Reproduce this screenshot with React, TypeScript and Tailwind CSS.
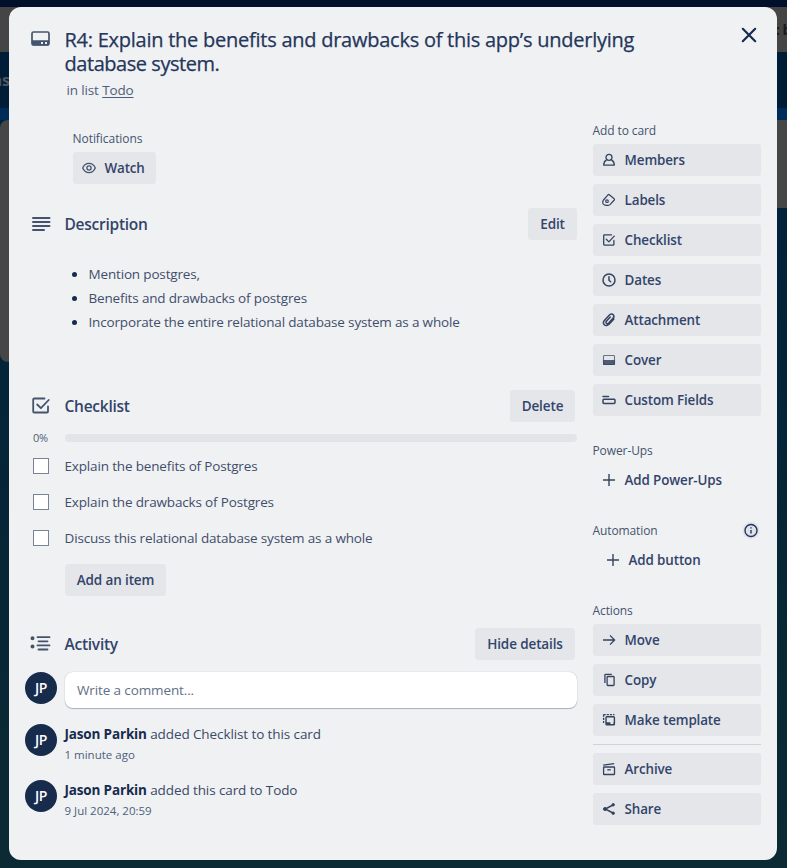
import React from "react";

type IconName =
  | "members" | "labels" | "checklist" | "dates" | "attachment" | "cover" | "fields"
  | "plus" | "move" | "copy" | "template" | "archive" | "share";

const shapes: Record<IconName, React.ReactNode> = {
  members: (
    <g fill="none" stroke="currentColor" strokeWidth="1.3" strokeLinejoin="round">
      <circle cx="8" cy="5.3" r="3" />
      <path d="M5.6 7.8C3.7 8.8 2.7 10.5 2.7 13.2H13.3C13.3 10.5 12.3 8.8 10.4 7.8" />
    </g>
  ),
  labels: (
    <g fill="none" stroke="currentColor" strokeWidth="1.2" strokeLinejoin="round">
      <path d="M8.3 2.7L13.2 6.8Q13.8 7.4 13.3 8L9 12.6Q7.6 13.8 5.5 13.3L3.3 12.8Q2.1 12.4 1.8 11.2Q1.4 9.3 2.5 8L7 2.8Q7.6 2.1 8.3 2.7Z" />
      <circle cx="6" cy="9.2" r="1.3" />
    </g>
  ),
  checklist: (
    <g fill="none" stroke="currentColor" strokeWidth="1.3" strokeLinejoin="round" strokeLinecap="round">
      <path d="M10.5 2.9H3.2Q2.7 2.9 2.7 3.4V12.6Q2.7 13.1 3.2 13.1H12.4Q12.9 13.1 12.9 12.6V8.5" />
      <path d="M5.3 7.2L7.9 9.9L13.2 4.1" />
    </g>
  ),
  dates: (
    <g fill="none" stroke="currentColor" strokeWidth="1.5" strokeLinecap="round" strokeLinejoin="round">
      <circle cx="8" cy="8" r="6" />
      <path d="M8 4.7V8.2L9.6 9.7" />
    </g>
  ),
  attachment: (
    <path
      d="M12.9 7.1L8.3 12.1C6.8 13.7 4.5 14.1 3.3 12.8C2.1 11.5 2.4 9.4 3.8 7.9L8.2 3.2C9.4 1.9 11.2 1.7 12.2 2.7C13.2 3.8 13 5.4 11.8 6.6L7.7 11C6.9 11.8 5.9 11.9 5.3 11.3C4.7 10.7 4.8 9.7 5.6 8.9L9.3 5"
      fill="none" stroke="currentColor" strokeWidth="1.5" strokeLinecap="round"
    />
  ),
  cover: (
    <g>
      <rect x="2.5" y="3.5" width="11" height="9" rx="0.8" fill="none" stroke="currentColor" strokeWidth="1.1" opacity="0.7" />
      <rect x="2" y="8" width="12" height="5" rx="0.8" fill="currentColor" opacity="0.85" />
    </g>
  ),
  fields: (
    <g fill="none" stroke="currentColor" strokeWidth="1.5" strokeLinecap="round">
      <path d="M2 4.6H7.5" />
      <rect x="2" y="7.3" width="12" height="4.2" rx="0.9" />
    </g>
  ),
  plus: <path d="M8 2V14M2 8H14" stroke="currentColor" strokeWidth="1.4" />,
  move: <path d="M2 8H13.6M9 3.4L13.6 8L9 12.6" fill="none" stroke="currentColor" strokeWidth="1.3" />,
  copy: (
    <g fill="none" stroke="currentColor" strokeWidth="1.3" strokeLinejoin="round">
      <rect x="6.1" y="4.5" width="7" height="9" rx="0.7" />
      <path d="M3.9 10.9V3Q3.9 2.4 4.5 2.4H10.8" />
    </g>
  ),
  template: (
    <g fill="none" stroke="currentColor">
      <rect x="5" y="4.8" width="8.4" height="8" rx="0.8" strokeWidth="1.4" />
      <path d="M5 11.4H9.4M12.6 11.4H13.4" strokeWidth="2.4" />
      <path d="M2.5 2.7H13.5" strokeWidth="1.3" strokeDasharray="2.2 1" />
      <path d="M2.6 2.5V12" strokeWidth="1.3" strokeDasharray="2.2 1" />
    </g>
  ),
  archive: (
    <g fill="none" stroke="currentColor" strokeWidth="1.3" strokeLinejoin="round">
      <path d="M2.2 4.1L13.2 2.7" />
      <rect x="2.6" y="6" width="10.9" height="7.5" rx="0.6" />
      <path d="M6.3 8.8H9.8" />
    </g>
  ),
  share: (
    <g stroke="currentColor" fill="currentColor">
      <path d="M12 4L4.2 8L12 12" fill="none" strokeWidth="1.5" />
      <circle cx="4" cy="8" r="1.5" />
      <circle cx="12.2" cy="3.8" r="1.2" />
      <circle cx="12.2" cy="12.2" r="1.2" />
    </g>
  ),
};

function Icon({ name }: { name: IconName }) {
  return (
    <svg viewBox="0 0 16 16" className="h-4 w-4 shrink-0 text-[#34435f]">
      {shapes[name]}
    </svg>
  );
}

function SideButton({ icon, children, className = "bg-[#e4e6ea] pl-2" }: { icon: IconName; children: React.ReactNode; className?: string }) {
  return (
    <button className={`flex h-8 w-full items-center gap-[7.6px] rounded-[3px] text-[13.4px] font-semibold tracking-[-0.12px] whitespace-nowrap text-[#33446a] ${className}`}>
      <Icon name={icon} />
      <span>{children}</span>
    </button>
  );
}

function SideLabel({ children }: { children: React.ReactNode }) {
  return <h3 className="-ml-[0.5px] text-xs leading-5 font-medium tracking-[-0.1px] text-[#44546f]">{children}</h3>;
}

function GreyButton({ children, className }: { children: React.ReactNode; className: string }) {
  return (
    <button className={`flex h-8 shrink-0 items-center justify-center rounded-[3px] bg-[#e4e6ea] text-[13.5px] font-semibold tracking-[-0.12px] whitespace-nowrap text-[#33446a] ${className}`}>
      {children}
    </button>
  );
}

function SectionHeader({ icon, title, children }: { icon: React.ReactNode; title: string; children: React.ReactNode }) {
  return (
    <div className="flex h-8 items-center">
      <svg viewBox="0 0 24 20" className="ml-1 h-5 w-6 shrink-0 text-[#44546f]">{icon}</svg>
      <h2 className="ml-[11.5px] flex-1 text-[15.5px] leading-6 font-semibold tracking-[-0.26px] text-[#33446a]">{title}</h2>
      {children}
    </div>
  );
}

function Avatar() {
  return (
    <div className="flex h-8 w-8 shrink-0 items-center justify-center rounded-full bg-[#172b4d] text-sm font-semibold tracking-[-0.3px] text-white">
      JP
    </div>
  );
}

function CheckItem({ children }: { children: React.ReactNode }) {
  return (
    <li className="flex h-9 items-center">
      <span className="ml-2 h-4 w-4 shrink-0 border border-[#78839a] bg-white" />
      <span className="ml-[15.5px] text-[13.5px] tracking-[-0.16px] text-[#3f4e6b]">{children}</span>
    </li>
  );
}

function ActivityEntry({ action, time }: { action: string; time: string }) {
  return (
    <li className="flex h-14 gap-[7.5px]">
      <Avatar />
      <div>
        <p className="text-[13.5px] leading-5 tracking-[-0.1px] text-[#3a4967]">
          <span className="font-bold tracking-[-0.16px] text-[#172b4d]">Jason Parkin</span> {action}
        </p>
        <p className="mt-px text-[11.5px] leading-5 text-[#4f5e7a]">{time}</p>
      </div>
    </li>
  );
}

function Backdrop() {
  return (
    <div className="flex h-full flex-col bg-linear-to-b from-[#001f3c] to-[#0c2a33]">
      <div className="h-[7px] bg-[#00102b]" />
      <div className="flex h-[45px] items-center justify-end bg-[#444544] text-sm font-bold whitespace-nowrap text-[#171b20]">
        <span className="w-[11px] tracking-[-0.6px]">: b</span>
      </div>
      <div className="flex h-14 items-center bg-[#001d38] text-base font-bold text-[#4c555e]">
        <span className="flex w-[10px] justify-end">as</span>
      </div>
      <div className="h-3 bg-[#002c58]" />
      <div className="flex items-start justify-between">
        <div className="h-[242px] w-6 rounded-l-lg bg-[#454646]" />
        <div className="h-[88px] w-6 bg-[#454646]" />
      </div>
    </div>
  );
}

export default function App() {
  return (
    <div className="relative h-[868px] w-[787px] overflow-hidden font-['Open_Sans','Noto_Sans',sans-serif]">
      <Backdrop />
      <div role="dialog" className="absolute top-[7px] left-[9px] flex h-[853px] w-[768px] rounded-xl bg-[#f0f1f3]">
        <main className="ml-4 w-[552px] shrink-0">
          <header className="mt-[21px] flex h-[100px]">
            <svg viewBox="0 0 20 16" className="mt-[3px] ml-[6px] h-4 w-5 shrink-0 text-[#44546f]">
              <rect x="1" y="1" width="17" height="13" rx="1.5" fill="none" stroke="currentColor" strokeWidth="1.7" />
              <path d="M1 9.2H18V13.5Q18 14.5 17 14.5H2Q1 14.5 1 13.5Z" fill="currentColor" />
              <rect x="10" y="11" width="2" height="2" fill="#f0f1f3" />
              <rect x="14" y="11" width="2" height="2" fill="#f0f1f3" />
            </svg>
            <div className="ml-[13.5px] whitespace-nowrap">
              <h1 className="text-xl leading-6 font-medium text-[#24365a] [-webkit-text-stroke:0.25px]">
                <span className="block tracking-[-0.25px]">R4: Explain the benefits and drawbacks of this app’s underlying</span>
                <span className="block tracking-[-0.45px]">database system.</span>
              </h1>
              <p className="mt-1 ml-[2px] text-[13.5px] leading-5 tracking-[-0.14px] text-[#4f5e7a]">
                in list <a className="underline underline-offset-2">Todo</a>
              </p>
            </div>
          </header>

          <section className="ml-12">
            <h3 className="-ml-[0.5px] text-xs leading-[22px] font-medium tracking-[-0.05px] text-[#44546f]">Notifications</h3>
            <button className="mt-[2px] flex h-8 w-[83px] items-center gap-2 rounded-[3px] bg-[#e4e6ea] pl-[7.5px] text-[13.4px] font-semibold tracking-[-0.15px] text-[#33446a]">
              <svg viewBox="0 0 16 16" className="h-4 w-4 shrink-0 text-[#44546f]" fill="none" stroke="currentColor" strokeWidth="1.3">
                <path d="M1.7 8C3 5 5.3 3.4 8 3.4S13 5 14.3 8C13 11 10.7 12.6 8 12.6S3 11 1.7 8Z" />
                <circle cx="8" cy="8" r="2.1" />
              </svg>
              <span>Watch</span>
            </button>
          </section>

          <section className="mt-6">
            <SectionHeader
              title="Description"
              icon={<path d="M4 4H20.5M4 8H20.5M4 12H20.5M4 16H15" stroke="currentColor" strokeWidth="2" strokeLinecap="round" />}
            >
              <GreyButton className="w-[49px]">Edit</GreyButton>
            </SectionHeader>
            <ul className="mt-[22px] ml-[47px] text-[13.5px] leading-6 tracking-[-0.165px] text-[#3f4e6b]">
              {["Mention postgres,", "Benefits and drawbacks of postgres", "Incorporate the entire relational database system as a whole"].map((t) => (
                <li key={t} className="flex items-center">
                  <span className="mr-[11.5px] h-[5px] w-[5px] rounded-full bg-[#172b4d]" />
                  {t}
                </li>
              ))}
            </ul>
          </section>

          <section className="mt-14">
            <SectionHeader
              title="Checklist"
              icon={
                <g fill="none" stroke="currentColor" strokeWidth="1.8" strokeLinecap="round" strokeLinejoin="round">
                  <path d="M15.5 2.5H5.2Q4.2 2.5 4.2 3.5V15.5Q4.2 16.5 5.2 16.5H18Q19 16.5 19 15.5V10.5" />
                  <path d="M8.2 8.5L11.9 12.2L19.7 4" />
                </g>
              }
            >
              <GreyButton className="mr-[2px] w-[65px]">Delete</GreyButton>
            </SectionHeader>
            <div className="mt-3 flex h-2 items-center">
              <span className="w-10 pt-px pl-2 text-[11px] tracking-[-0.3px] text-[#4f5e7a]">0%</span>
              <div className="h-2 flex-1 rounded bg-[#e3e4e8]" />
            </div>
            <ul className="mt-[6px]">
              <CheckItem>Explain the benefits of Postgres</CheckItem>
              <CheckItem>Explain the drawbacks of Postgres</CheckItem>
              <CheckItem>Discuss this relational database system as a whole</CheckItem>
            </ul>
            <GreyButton className="mt-2 ml-10 w-[101px]">Add an item</GreyButton>
          </section>

          <section className="mt-8">
            <SectionHeader
              title="Activity"
              icon={
                <g stroke="currentColor" strokeWidth="1.8" strokeLinecap="round">
                  <path d="M8.5 3.2H20.5M9.5 7.3H18.5M8.5 11.4H20.5M9.5 15.5H18.5" />
                  <circle cx="3.5" cy="4.3" r="1.1" fill="currentColor" />
                  <circle cx="3.5" cy="12.4" r="1.1" fill="currentColor" />
                </g>
              }
            >
              <GreyButton className="mr-[2px] w-[100px]">Hide details</GreyButton>
            </SectionHeader>
            <div className="mt-3 flex h-13 gap-2">
              <Avatar />
              <div className="flex h-9 flex-1 items-center rounded-lg bg-white pl-3 text-[13.5px] tracking-[-0.12px] text-[#626f86] shadow-[0_1px_1px_#a9afba,0_0_1px_#a9afba]">
                Write a comment...
              </div>
            </div>
            <ul>
              <ActivityEntry action="added Checklist to this card" time="1 minute ago" />
              <ActivityEntry action="added this card to Todo" time="9 Jul 2024, 20:59" />
            </ul>
          </section>
        </main>

        <aside className="ml-4 w-[168px]">
          <button aria-label="Close" className="mt-[18px] ml-[146px] block h-5 w-5 text-[#172b4d]">
            <svg viewBox="0 0 20 20" className="h-5 w-5">
              <path d="M3.8 3.8L16.2 16.2M16.2 3.8L3.8 16.2" stroke="currentColor" strokeWidth="2.2" strokeLinecap="round" />
            </svg>
          </button>
          <div className="mt-[76px] flex flex-col gap-2">
            <div className="-mb-[5px]"><SideLabel>Add to card</SideLabel></div>
            <SideButton icon="members">Members</SideButton>
            <SideButton icon="labels">Labels</SideButton>
            <SideButton icon="checklist">Checklist</SideButton>
            <SideButton icon="dates">Dates</SideButton>
            <SideButton icon="attachment">Attachment</SideButton>
            <SideButton icon="cover">Cover</SideButton>
            <SideButton icon="fields">Custom Fields</SideButton>
          </div>
          <div className="mt-[25px]">
            <SideLabel>Power-Ups</SideLabel>
            <SideButton icon="plus" className="mt-[3px] pl-2">Add Power-Ups</SideButton>
          </div>
          <div className="mt-[25px]">
            <div className="flex items-center justify-between">
              <SideLabel>Automation</SideLabel>
              <svg viewBox="0 0 20 20" className="h-5 w-5 text-[#24365a]">
                <circle cx="10" cy="9.5" r="8.4" fill="#dfe3e9" />
                <circle cx="10" cy="9.5" r="6" fill="none" stroke="currentColor" strokeWidth="1.4" />
                <path d="M10 9V12.4M10 6.2V7.4" stroke="currentColor" strokeWidth="1.4" />
              </svg>
            </div>
            <SideButton icon="plus" className="mt-[3px] pl-3">Add button</SideButton>
          </div>
          <div className="mt-[25px] flex flex-col gap-2">
            <div className="-mb-[5px]"><SideLabel>Actions</SideLabel></div>
            <SideButton icon="move">Move</SideButton>
            <SideButton icon="copy">Copy</SideButton>
            <SideButton icon="template">Make template</SideButton>
            <hr className="border-[#cfd2d9]" />
            <SideButton icon="archive">Archive</SideButton>
            <SideButton icon="share">Share</SideButton>
          </div>
        </aside>
      </div>
    </div>
  );
}
